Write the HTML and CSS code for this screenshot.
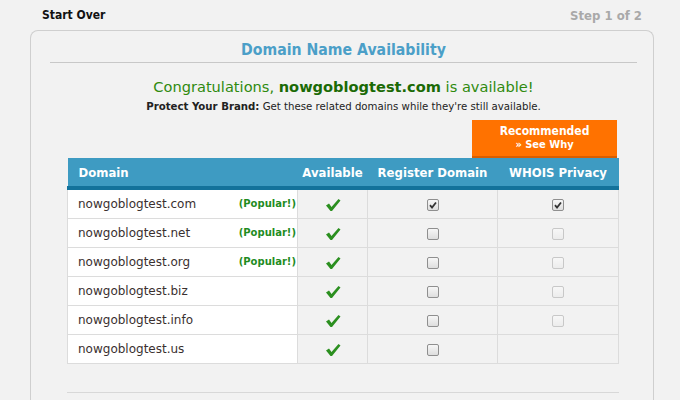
FILE: index.html
```html
<!DOCTYPE html>
<html>
<head>
<meta charset="utf-8">
<link rel="stylesheet" href="styles.css">
</head>
<body>
<div class="topbar">
  <a class="start">Start Over</a>
  <span class="step">Step 1 of 2</span>
</div>
<div class="card">
  <h1 class="title">Domain Name Availability</h1>
  <div class="congrats">Congratulations, <b>nowgoblogtest.com</b> is available!</div>
  <div class="protect"><b>Protect Your Brand:</b> Get these related domains while they're still available.</div>
  <div class="recwrap"><div class="rec">Recommended<br><span class="why">» See Why</span></div></div>
  <table class="dt">
    <colgroup><col class="w-dom"><col class="w-av"><col class="w-reg"><col class="w-who"></colgroup>
    <thead>
      <tr><th class="c-dom">Domain</th><th>Available</th><th>Register Domain</th><th>WHOIS Privacy</th></tr>
    </thead>
    <tbody>
      <tr><td class="c-dom"><span class="dn">nowgoblogtest.com</span><span class="pop">(Popular!)</span></td><td><svg class="ok" viewBox="0 0 16 14"><path d="M1 7.5 L4 5.5 L6.5 9 L13.5 1 L15.5 2.5 L7 13 L5.5 13 Z" fill="#2b8f1f"/></svg></td><td><span class="cb on"><svg viewBox="0 0 10 10"><path d="M2 5.2 L4 7.5 L8 2.5" stroke="#333" stroke-width="1.8" fill="none"/></svg></span></td><td><span class="cb on"><svg viewBox="0 0 10 10"><path d="M2 5.2 L4 7.5 L8 2.5" stroke="#333" stroke-width="1.8" fill="none"/></svg></span></td></tr>
      <tr><td class="c-dom"><span class="dn">nowgoblogtest.net</span><span class="pop">(Popular!)</span></td><td><svg class="ok" viewBox="0 0 16 14"><path d="M1 7.5 L4 5.5 L6.5 9 L13.5 1 L15.5 2.5 L7 13 L5.5 13 Z" fill="#2b8f1f"/></svg></td><td><span class="cb"></span></td><td><span class="cb dis"></span></td></tr>
      <tr><td class="c-dom"><span class="dn">nowgoblogtest.org</span><span class="pop">(Popular!)</span></td><td><svg class="ok" viewBox="0 0 16 14"><path d="M1 7.5 L4 5.5 L6.5 9 L13.5 1 L15.5 2.5 L7 13 L5.5 13 Z" fill="#2b8f1f"/></svg></td><td><span class="cb"></span></td><td><span class="cb dis"></span></td></tr>
      <tr><td class="c-dom"><span class="dn">nowgoblogtest.biz</span></td><td><svg class="ok" viewBox="0 0 16 14"><path d="M1 7.5 L4 5.5 L6.5 9 L13.5 1 L15.5 2.5 L7 13 L5.5 13 Z" fill="#2b8f1f"/></svg></td><td><span class="cb"></span></td><td><span class="cb dis"></span></td></tr>
      <tr><td class="c-dom"><span class="dn">nowgoblogtest.info</span></td><td><svg class="ok" viewBox="0 0 16 14"><path d="M1 7.5 L4 5.5 L6.5 9 L13.5 1 L15.5 2.5 L7 13 L5.5 13 Z" fill="#2b8f1f"/></svg></td><td><span class="cb"></span></td><td><span class="cb dis"></span></td></tr>
      <tr><td class="c-dom"><span class="dn">nowgoblogtest.us</span></td><td><svg class="ok" viewBox="0 0 16 14"><path d="M1 7.5 L4 5.5 L6.5 9 L13.5 1 L15.5 2.5 L7 13 L5.5 13 Z" fill="#2b8f1f"/></svg></td><td><span class="cb"></span></td><td></td></tr>
    </tbody>
  </table>
  <div class="bottomrule"></div>
</div>
</body>
</html>
```
FILE: styles.css
```css
html, body { margin: 0; padding: 0; }
body {
  background: #f2f2f2;
  font-family: "DejaVu Sans", Verdana, sans-serif;
  color: #222;
  width: 680px;
  height: 400px;
  overflow: hidden;
}
.topbar {
  display: flex;
  justify-content: space-between;
  align-items: center;
  height: 30px;
  padding: 0 38px 0 42px;
  font-weight: bold;
  font-stretch: condensed;
}
.start { font-size: 12px; color: #111; }
.step { font-size: 13px; color: #a9a9a9; }
.card {
  margin: 0 26px 0 30px;
  border: 1px solid #cfcfcf;
  border-bottom: none;
  border-radius: 8px 8px 0 0;
  padding: 0 16px 0 19px;
  height: 380px;
}
.title {
  margin: 0;
  font-size: 15.7px;
  font-weight: bold;
  font-stretch: condensed;
  color: #4b9fc8;
  text-align: center;
  height: 31px;
  line-height: 37px;
  border-bottom: 1px solid #c8c8c8;
}
.congrats {
  margin-top: 15px;
  text-align: center;
  font-size: 14.6px;
  color: #2f8a0e;
  line-height: 18px;
}
.congrats b { color: #1b6a06; }
.protect {
  margin-top: 4px;
  text-align: center;
  font-size: 10.2px;
  line-height: 14px;
  color: #222;
}
.recwrap {
  display: flex;
  justify-content: flex-end;
  padding: 0 20px 0 0;
  margin-top: 6px;
}
.rec {
  width: 145px;
  height: 36px;
  background: #ff7200;
  border-bottom: 2px solid #d85e00;
  color: #fff;
  font-weight: bold;
  font-stretch: condensed;
  font-size: 12px;
  line-height: 14px;
  text-align: center;
  display: flex;
  flex-direction: column;
  justify-content: center;
}
.rec .why { font-size: 11px; }
.dt {
  margin: 0 18px 0 17px;
  width: 551px;
  border-collapse: collapse;
  table-layout: fixed;
}
.w-dom { width: 230px; }
.w-av { width: 70px; }
.w-reg { width: 130px; }
.w-who { width: 121px; }
.dt th {
  background: #3e9bc2;
  color: #fff;
  font-weight: bold;
  font-stretch: condensed;
  font-size: 13px;
  height: 28px;
  padding: 0;
  border-bottom: 4px solid #13729b;
  text-align: center;
  white-space: nowrap;
}
.dt th.c-dom { text-align: left; padding-left: 11px; }
.dt td {
  height: 28px;
  padding: 0;
  border: 1px solid #dcdcdc;
  text-align: center;
  vertical-align: middle;
  background: #f2f2f2;
}
.dt td.c-dom {
  background: #fff;
  text-align: left;
  padding: 0 1px 0 10px;
  font-size: 12px;
  color: #3a3030;
}
.dn { float: left; }
.pop {
  float: right;
  font-size: 10px;
  font-weight: bold;
  color: #1f8c1f;
  padding-top: 1px;
}
.ok { width: 16px; height: 14px; display: inline-block; vertical-align: middle; }
.cb {
  display: inline-block;
  width: 10px;
  height: 10px;
  border: 1px solid #8f8f8f;
  border-radius: 2px;
  background: linear-gradient(#f7f7f7, #dedede);
  vertical-align: middle;
}
.cb svg { width: 10px; height: 10px; display: block; }
.cb.dis { border-color: #c8c8c8; background: linear-gradient(#f7f7f7, #ececec); }
.bottomrule {
  margin: 28px 18px 0 17px;
  border-top: 1px solid #d8d8d8;
}
```
